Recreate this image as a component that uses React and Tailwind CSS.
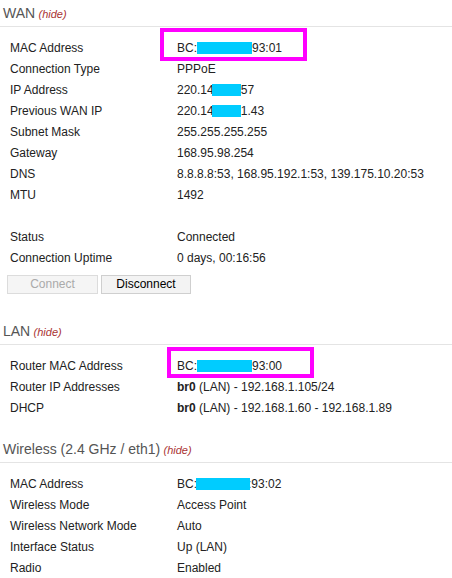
import React from "react";

const Cyan = ({ w, className = "" }) => (
  <span className={`relative z-10 inline-block h-[12px] bg-[#0cf] align-[-2px] ${className}`} style={{ width: w }} />
);

function Header({ title }) {
  return (
    <div className="border-b border-[#e4e4e4] pl-[3px] pt-[5px] pb-[4px] leading-[16px]">
      <span className="text-[14px] text-[#555]">{title}</span>{" "}
      <span className="text-[11px] italic text-[#a33]">(hide)</span>
    </div>
  );
}

function Row({ label, children, box }) {
  return (
    <div className="relative flex h-[21px] items-center pl-[10px]">
      <div className="w-[167px] shrink-0">{label}</div>
      <div className="whitespace-nowrap">{children}</div>
      {box === "wan" && (
        <div className="pointer-events-none absolute left-[160px] top-[-9px] h-[33px] w-[147px] border-[4px] border-[#f0f]" />
      )}
      {box === "lan" && (
        <div className="pointer-events-none absolute left-[167px] top-[-8px] h-[31px] w-[147px] border-[4px] border-[#f0f]" />
      )}
    </div>
  );
}

export default function App() {
  return (
    <div className="w-[452px] h-[578px] overflow-hidden bg-white text-[12px] text-[#222]" style={{ fontFamily: '"Liberation Sans", Arial, sans-serif' }}>
      {/* WAN */}
      <section>
        <Header title="WAN" />
        <div className="mt-[10px]">
          <Row label="MAC Address" box="wan">
            BC:<Cyan w={55} />93:01
          </Row>
          <Row label="Connection Type">PPPoE</Row>
          <Row label="IP Address">
            220.14<Cyan w={29} className="-ml-[2px]" />57
          </Row>
          <Row label="Previous WAN IP">
            220.14<Cyan w={29} className="-ml-[2px]" />1.43
          </Row>
          <Row label="Subnet Mask">255.255.255.255</Row>
          <Row label="Gateway">168.95.98.254</Row>
          <Row label="DNS">8.8.8.8:53, 168.95.192.1:53, 139.175.10.20:53</Row>
          <Row label="MTU">1492</Row>
          <div className="h-[21px]" />
          <Row label="Status">Connected</Row>
          <Row label="Connection Uptime">0 days, 00:16:56</Row>
        </div>
        <div className="mt-[7px] mb-[6px] flex gap-[3px] pl-[7px]">
          <button disabled className="h-[19px] w-[91px] border border-[#dcdcdc] bg-[#f5f5f5] text-[12px] leading-[17px] text-[#aaa]">
            Connect
          </button>
          <button className="h-[19px] w-[90px] border border-[#cfcfcf] bg-[#f3f3f3] text-[12px] leading-[17px] text-black">
            Disconnect
          </button>
        </div>
      </section>

      {/* LAN */}
      <section className="mt-[24px]">
        <Header title="LAN" />
        <div className="mt-[10px]">
          <Row label="Router MAC Address" box="lan">
            BC:<Cyan w={55} />93:00
          </Row>
          <Row label="Router IP Addresses">
            <b>br0</b> (LAN) - 192.168.1.105/24
          </Row>
          <Row label="DHCP">
            <b>br0</b> (LAN) - 192.168.1.60 - 192.168.1.89
          </Row>
        </div>
      </section>

      {/* Wireless */}
      <section className="mt-[18px]">
        <Header title="Wireless (2.4 GHz / eth1)" />
        <div className="mt-[10px]">
          <Row label="MAC Address">
            BC:<Cyan w={54} className="-ml-[1px]" />
            <span className="-ml-[2px]">:93:02</span>
          </Row>
          <Row label="Wireless Mode">Access Point</Row>
          <Row label="Wireless Network Mode">Auto</Row>
          <Row label="Interface Status">Up (LAN)</Row>
          <Row label="Radio">Enabled</Row>
        </div>
      </section>
    </div>
  );
}
